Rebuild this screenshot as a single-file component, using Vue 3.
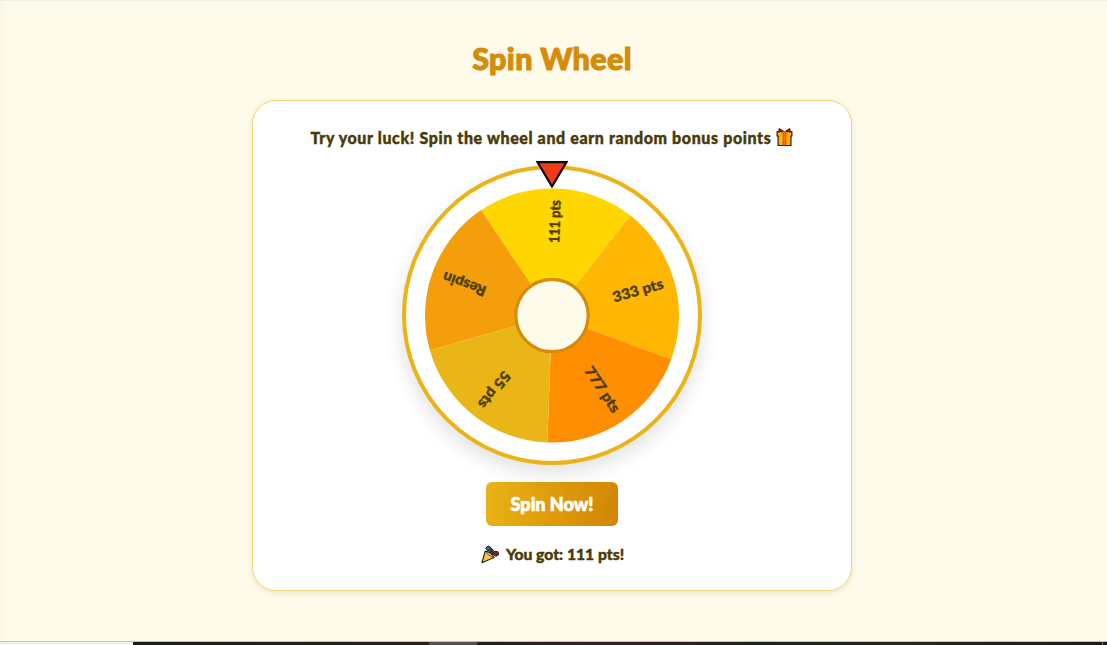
<template>
  <div class="page">
    <h1 class="title">Spin Wheel</h1>

    <div class="card">
      <p class="intro">
        <span class="intro-text">Try your luck! Spin the wheel and earn random bonus points</span>
        <svg class="gift" viewBox="0 0 18 20">
          <path d="M8.5 4.5 3.5 1.2 2.8 4.5ZM9.5 4.5 14.5 1.2 15.2 4.5Z" fill="#f03a17" stroke="#222" stroke-width="1.2" stroke-linejoin="round" />
          <path d="M1.2 4.2h15.6v4.8h-1v10H2.2V9h-1Z" fill="#ffb300" stroke="#222" stroke-width="1.3" stroke-linejoin="round" />
          <path d="M7 3.8h4v14.8H7Z" fill="#f4511e" />
          <path d="M9 5v13.4" stroke="#ff8f00" stroke-width=".6" />
        </svg>
      </p>

      <div class="wheel-box">
        <div class="wheel">
          <svg class="slices" viewBox="-146 -146 292 292">
            <path
              v-for="(slice, index) in slices"
              :key="slice.label"
              :d="slicePath(index)"
              :fill="slice.color"
            />
            <text
              v-for="(slice, index) in slices"
              :key="'label-' + slice.label"
              class="label"
              x="115.5"
              y="4.5"
              text-anchor="end"
              :textLength="slice.width"
              lengthAdjust="spacingAndGlyphs"
              :transform="`rotate(${offset + index * step - 90})`"
            >{{ slice.label }}</text>
            <circle r="36.2" class="hub" />
          </svg>
        </div>
        <svg class="pointer" viewBox="0 0 32 28">
          <path d="M1.6 2.2H30.4L16 26.5Z" />
        </svg>
      </div>

      <button class="spin-button" @click="spin"><span>Spin Now!</span></button>

      <p class="result">
        <svg class="popper" viewBox="0 0 20 20">
          <path d="M7 6 4.8 3.2 7.6 1l2.6 1.4-.6 3Z" fill="#176b87" stroke="#222" stroke-width="1" />
          <path d="m12 9 2.2-2.4 3.6.4 1 3-3 2Z" fill="#7d2028" stroke="#222" stroke-width="1" />
          <path d="m9 7 2.3-3.5 2.2 3.2-2.2 3Z" fill="#263c4b" stroke="#222" stroke-width="1" />
          <path d="M1 18.7 4.4 6.4Q11.4 7.6 13.8 13.2Z" fill="#ffc247" stroke="#222" stroke-width="1.2" stroke-linejoin="round" />
          <path d="M4.4 6.4Q7 11.4 13.8 13.2" fill="none" stroke="#222" stroke-width=".7" />
        </svg>
        <span class="result-text">You got: {{ result }}!</span>
      </p>
    </div>

    <div class="bottom-bar">
      <span class="bar-light"></span>
      <span class="bar-dark"></span>
      <span class="bar-active"></span>
      <span class="bar-rest"></span>
      <span class="bar-edge"></span>
    </div>
  </div>
</template>

<script setup>
import { ref } from 'vue'

const slices = [
  { label: '111 pts', color: '#ffd600', width: 43 },
  { label: '333 pts', color: '#ffb703', width: 52 },
  { label: '777 pts', color: '#ff8f00', width: 52 },
  { label: '55 pts', color: '#eab516', width: 43 },
  { label: 'Respin', color: '#f59e0b', width: 45 }
]

const step = 360 / slices.length
const offset = ref(2.1)
const result = ref('111 pts')

// Point on the rim, angle measured clockwise from the top
const rimPoint = (angle) => {
  const rad = (angle * Math.PI) / 180
  return `${(127 * Math.sin(rad)).toFixed(2)} ${(-127 * Math.cos(rad)).toFixed(2)}`
}

const slicePath = (index) => {
  const start = offset.value + (index - 0.5) * step
  return `M0 0 L${rimPoint(start)} A127 127 0 0 1 ${rimPoint(start + step)} Z`
}

const spin = () => {
  const winner = Math.floor(Math.random() * slices.length)
  offset.value = 2.1 - winner * step
  result.value = slices[winner].label
}
</script>

<style>
body {
  background: #fffbea;
  overflow: hidden;
}
</style>

<style scoped>
.page {
  height: 645px;
  display: flex;
  flex-direction: column;
  align-items: center;
  box-sizing: border-box;
  border-top: 1px solid #f2f0e3;
  background: linear-gradient(90deg, #fbf8e8, #fffbea 10px);
  font-family: Lato, "Open Sans", sans-serif;
  color: #4a3a05;
}

.title {
  margin: 37px 3px 0 0;
  height: 40px;
  line-height: 40px;
  font-size: 30.5px;
  font-weight: 900;
  letter-spacing: 0.35px;
  color: #d68c08;
  -webkit-text-stroke: 1.1px #d68c08;
  white-space: nowrap;
}

.card {
  width: 600px;
  height: 491px;
  margin: 22px 3px 0 0;
  box-sizing: border-box;
  border: 1px solid #f3d678;
  border-radius: 24px;
  background: #fff;
  box-shadow: 0 2px 6px rgba(120, 90, 10, 0.14);
  display: flex;
  flex-direction: column;
  align-items: center;
}

.intro {
  margin: 24px 0 0;
  height: 24px;
  display: flex;
  align-items: center;
  gap: 5px;
  font-size: 16px;
  font-weight: 900;
  letter-spacing: 0.61px;
  -webkit-text-stroke: 0.4px #4a3a05;
  white-space: nowrap;
}

.gift {
  width: 17px;
  height: 20px;
}

.wheel-box {
  position: relative;
  margin-top: 16px;
  width: 300px;
  height: 300px;
}

.wheel {
  width: 300px;
  height: 300px;
  box-sizing: border-box;
  border: 4px solid #eab316;
  border-radius: 50%;
  background: #fff;
  box-shadow: 0 8px 20px rgba(0, 0, 0, 0.12);
}

.slices {
  display: block;
  width: 292px;
  height: 292px;
  transform: translateY(0.5px);
}

.label {
  font-size: 14.5px;
  font-weight: 900;
  fill: #4f3e04;
  stroke: #4f3e04;
  stroke-width: 0.4px;
  stroke-linejoin: round;
}

.hub {
  fill: #fffbea;
  stroke: #d48c0a;
  stroke-width: 3.2px;
}

.pointer {
  position: absolute;
  left: 134px;
  top: -5px;
  width: 32px;
  height: 28px;
}

.pointer path {
  fill: #f33a18;
  stroke: #0b0b0b;
  stroke-width: 2.2px;
}

.spin-button {
  margin-top: 17px;
  width: 132px;
  height: 44px;
  padding: 0;
  border: none;
  border-radius: 6px;
  background: linear-gradient(100deg, #eab316, #d18504);
  color: #fff;
  font-family: inherit;
  font-size: 18px;
  font-weight: 900;
  -webkit-text-stroke: 0.7px #fff;
  cursor: pointer;
}

.result {
  margin: 16px 0 0 1px;
  height: 24px;
  display: flex;
  align-items: center;
  gap: 6px;
  font-size: 15.7px;
  font-weight: 900;
  -webkit-text-stroke: 0.4px #4a3a05;
  white-space: nowrap;
}

.popper {
  width: 19px;
  height: 19px;
}

.bottom-bar {
  align-self: stretch;
  margin-top: auto;
  height: 4px;
  box-sizing: border-box;
  border-top: 1px solid #c4c1b0;
  display: flex;
}

.bar-light {
  width: 133px;
  background: #f1f1f2;
}

.bar-dark {
  width: 296px;
  background: linear-gradient(90deg, #1c1b1f, #28221a);
}

.bar-active {
  width: 48px;
  background: #57504e;
}

.bar-rest {
  flex: 1;
  background: linear-gradient(90deg, #201f1b, #35202b 16%, #30202a 30%, #1e2220 45%, #28251a 70%, #1d1b21);
}

.bar-edge {
  width: 4px;
  background: #1d1b21;
  border-left: 1px solid #77747a;
}
</style>
